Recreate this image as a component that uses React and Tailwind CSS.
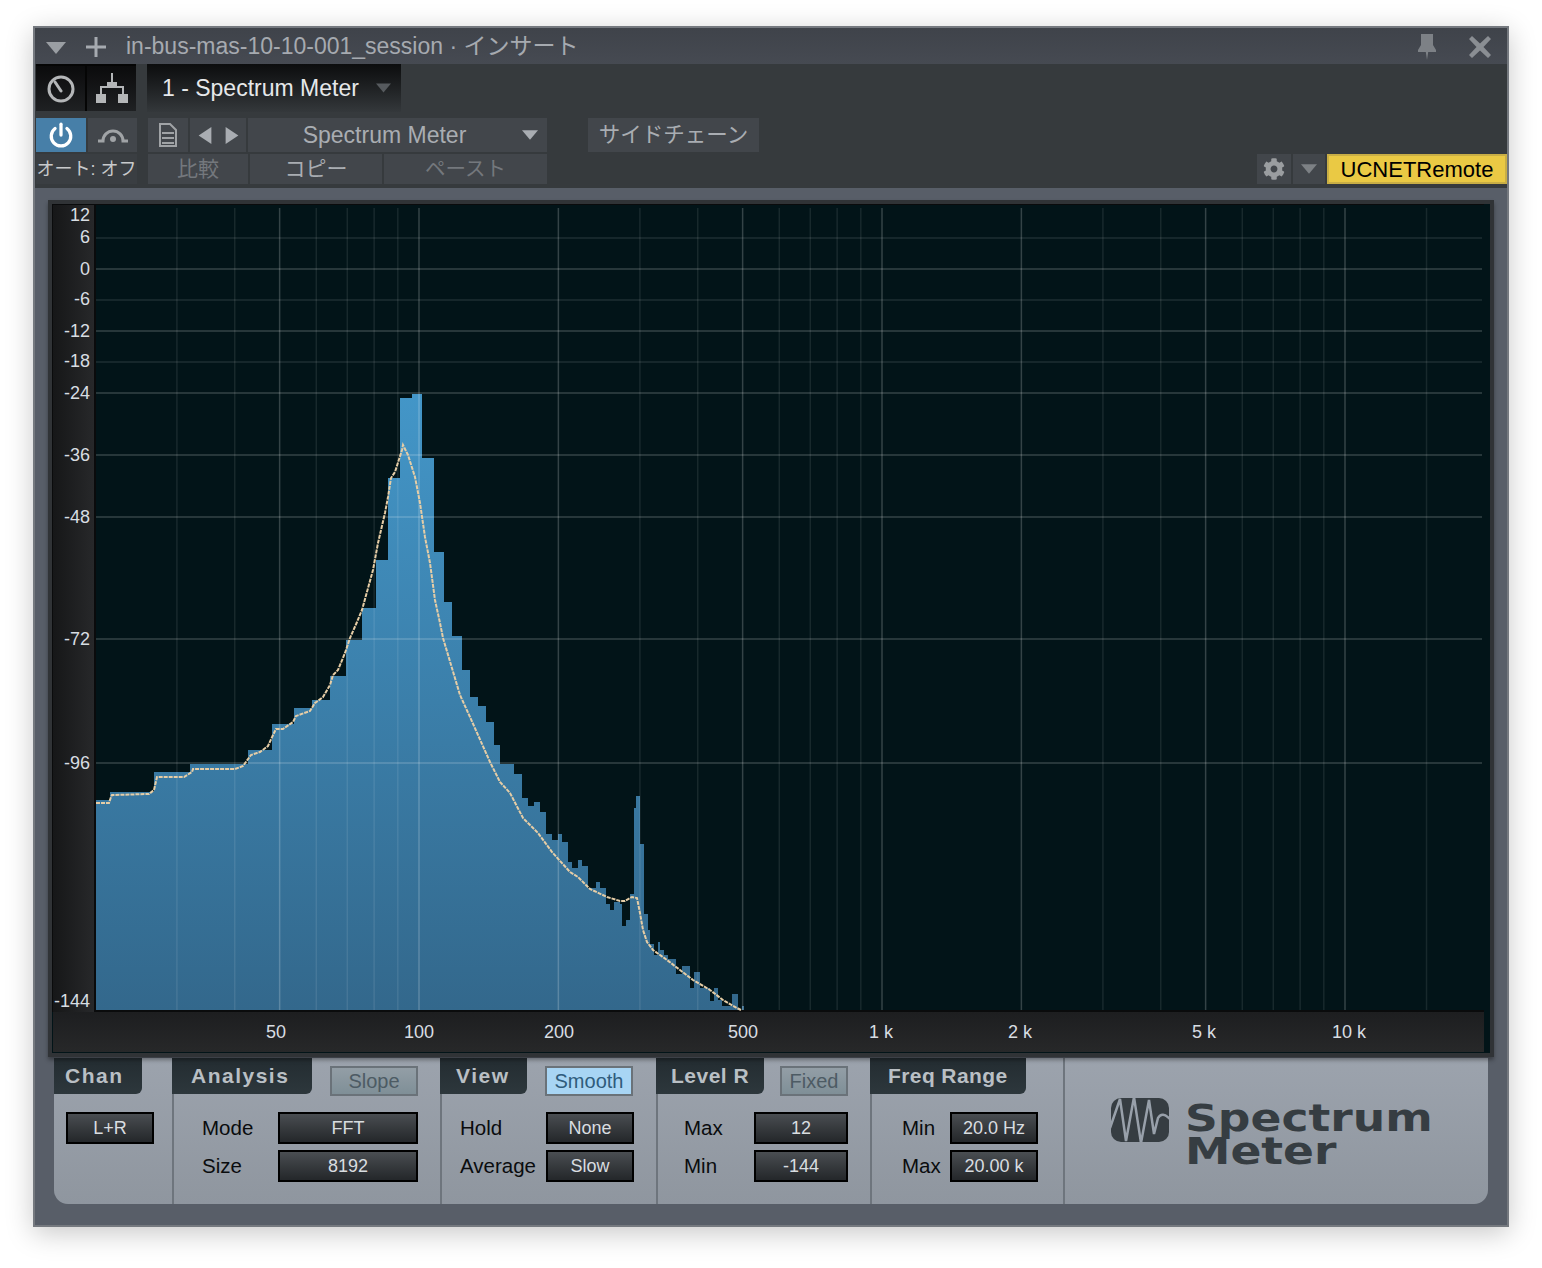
import { FaCog } from 'react-icons/fa'

// [x start, top y] of each spectrum bar, in page pixels
const BARS = [
  [96, 800], [110, 792], [154, 772], [190, 764], [248, 750], [272, 724], [294, 708], [312, 700], [330, 676], [346, 640],
  [362, 608], [376, 560], [388, 478], [400, 398], [412, 394], [422, 458], [434, 552], [444, 602], [452, 636], [462, 670],
  [470, 697], [478, 706], [486, 722], [494, 745], [500, 764], [514, 774], [522, 798], [528, 806], [534, 802], [540, 812],
  [546, 834], [552, 840], [558, 834], [562, 842], [568, 862], [572, 868], [578, 860], [582, 866], [588, 888], [596, 882],
  [600, 888], [606, 904], [610, 910], [614, 902], [620, 904], [622, 926], [626, 920], [630, 894], [634, 808], [636, 796],
  [640, 844], [644, 914], [648, 930], [650, 944], [654, 955], [658, 942], [660, 950], [664, 955], [668, 959], [676, 974],
  [682, 966], [690, 988], [694, 972], [700, 988], [710, 1001], [714, 988], [718, 1000], [722, 1006], [732, 994], [738, 1010], [742, 1006], [744, 1010],
]

const CURVE = [
  [96, 803], [109, 803], [111, 797], [112, 795], [149, 794], [154, 790], [157, 777], [184, 777], [192, 772], [193, 769],
  [235, 769], [243, 766], [251, 755], [260, 752], [268, 746], [273, 735], [276, 729], [283, 729], [293, 722], [296, 716],
  [310, 711], [315, 703], [323, 697], [330, 685], [333, 675], [338, 670], [345, 653], [350, 638], [357, 622], [362, 610],
  [373, 570], [378, 543], [385, 513], [388, 497], [391, 478], [395, 472], [402, 450], [403, 445], [408, 455], [415, 477],
  [420, 503], [425, 537], [430, 563], [435, 600], [440, 623], [443, 638], [460, 695], [470, 717], [490, 762], [500, 782],
  [510, 793], [523, 818], [538, 833], [552, 852], [570, 872], [578, 877], [590, 889], [607, 897], [620, 901], [625, 901],
  [632, 897], [637, 898], [640, 913], [643, 930], [647, 942], [653, 950], [667, 960], [680, 970], [693, 980], [710, 990],
  [723, 1000], [737, 1008], [741, 1010],
]

const freqX = (f) => 419 + 463 * Math.log10(f / 100)

const MAJOR_FREQS = [50, 100, 200, 500, 1000, 2000, 5000, 10000]
const MINOR_FREQS = [30, 40, 60, 70, 80, 90, 300, 400, 600, 700, 800, 900, 3000, 4000, 6000, 7000, 8000, 9000, 15000]
const MAJOR_DB = [269, 331, 393, 455, 517, 639, 763]
const MINOR_DB = [238, 300, 362]

const DB_LABELS = [
  ['12', 215], ['6', 237], ['0', 269], ['-6', 299], ['-12', 331], ['-18', 361], ['-24', 393],
  ['-36', 455], ['-48', 517], ['-72', 639], ['-96', 763], ['-144', 1001],
]
const FREQ_LABELS = [
  ['50', 276], ['100', 419], ['200', 559], ['500', 743], ['1 k', 881], ['2 k', 1020], ['5 k', 1204], ['10 k', 1349],
]

function barsPath() {
  let d = 'M96 1010'
  BARS.forEach(([x, top], i) => {
    const next = BARS[i + 1] ? BARS[i + 1][0] : 745
    d += ` L${x} ${top} L${next} ${top}`
  })
  return d + ' L745 1010 Z'
}

function Spectrum() {
  return (
    <svg className="block w-[1388px] h-[807px]" viewBox="96 205 1388 807">
      <defs>
        <linearGradient id="bar" gradientUnits="userSpaceOnUse" x1="0" y1="394" x2="0" y2="1010">
          <stop offset="0" stopColor="#4396c8" />
          <stop offset="1" stopColor="#33688c" />
        </linearGradient>
      </defs>
      <rect x="96" y="205" width="1388" height="805" fill="#021418" />
      <path d={barsPath()} fill="url(#bar)" />
      {MINOR_FREQS.map((f) => (
        <line key={f} x1={freqX(f)} x2={freqX(f)} y1="208" y2="1010" stroke="#fff" strokeOpacity="0.09" strokeWidth="1.5" />
      ))}
      {MAJOR_FREQS.map((f) => (
        <line key={f} x1={freqX(f)} x2={freqX(f)} y1="208" y2="1010" stroke="#fff" strokeOpacity="0.2" strokeWidth="1.5" />
      ))}
      {MINOR_DB.map((y) => (
        <line key={y} x1="96" x2="1482" y1={y} y2={y} stroke="#fff" strokeOpacity="0.11" strokeWidth="1.5" />
      ))}
      {MAJOR_DB.map((y) => (
        <line key={y} x1="96" x2="1482" y1={y} y2={y} stroke="#fff" strokeOpacity="0.2" strokeWidth="1.5" />
      ))}
      <polyline
        points={CURVE.map((p) => p.join(',')).join(' ')}
        fill="none"
        stroke="#e6cda6"
        strokeWidth="2"
        strokeDasharray="4 1"
      />
    </svg>
  )
}

function Tri({ dir = 'down', className }) {
  const pts = { down: '0,0 20,0 10,12', left: '12,0 12,16 0,8', right: '0,0 12,8 0,16' }
  const box = dir === 'down' ? '0 0 20 12' : '0 0 12 16'
  return (
    <svg viewBox={box} className={className}>
      <polygon points={pts[dir]} fill="currentColor" />
    </svg>
  )
}

function TitleBar() {
  return (
    <div className="flex items-center h-[36px] bg-linear-to-b from-[#3f434a] to-[#464a52] text-[#a6aab0]">
      <Tri className="ml-[11px] w-[20px] h-[12px] text-[#9a9ea3] mt-[3px]" />
      <svg viewBox="0 0 20 20" className="ml-[20px] w-[20px] h-[20px] text-[#a6aab0] mt-[2px]">
        <path d="M8.5 0h3v8.5H20v3h-8.5V20h-3v-8.5H0v-3h8.5z" fill="currentColor" />
      </svg>
      <span className="ml-[20px] text-[23px] leading-none whitespace-nowrap">in-bus-mas-10-10-001_session · インサート</span>
      <svg viewBox="0 0 18 26" className="ml-auto w-[18px] h-[26px] text-[#7d8186] mt-[2px]">
        <path d="M3 0h12v11l3 5v2H10.2L9 26l-1.200-8H0v-2l3-5z" fill="currentColor" />
      </svg>
      <svg viewBox="0 0 22 22" className="ml-[33px] mr-[16px] w-[22px] h-[22px] text-[#8a8e93] mt-[2px]">
        <path d="M3 0l8 7.500L19 0l3 3-7.500 8 7.500 8-3 3-8-7.500L3 22l-3-3 7.500-8L0 3z" fill="currentColor" />
      </svg>
    </div>
  )
}

function DarkTool({ children }) {
  return (
    <div className="flex items-center justify-center w-[49px] h-full bg-linear-to-b from-[#0b0b0c] to-[#1f2123] text-[#b4b6b8]">
      {children}
    </div>
  )
}

function Tool({ className = '', children }) {
  return <div className={`flex items-center justify-center h-full bg-[#42464b] ${className}`}>{children}</div>
}

function Toolbar() {
  return (
    <div className="flex flex-col h-[124px] pl-[1px] bg-[#363a3d] text-[#a9adb2]">
      <div className="flex h-[48px]">
        <div className="flex gap-[2px] h-[47px] pt-[2px] bg-[#050505]">
          <DarkTool>
            <svg viewBox="0 0 30 30" className="w-[30px] h-[30px]" fill="none" stroke="currentColor" strokeWidth="3">
              <circle cx="15" cy="15" r="12" />
              <path d="M9 8l6 9" strokeLinecap="round" />
            </svg>
          </DarkTool>
          <DarkTool>
            <svg viewBox="0 0 38 32" className="w-[38px] h-[32px]" fill="currentColor">
              <path d="M18 0h2v10h-2z" />
              <path d="M14 9h10v5H14z" />
              <path d="M8 13h22v2H8zM7 13h2v8H7zM29 13h2v8h-2z" />
              <path d="M3 21h10v9H3zM25 21h10v9H25z" />
            </svg>
          </DarkTool>
        </div>
        <div className="flex items-center ml-[11px] w-[254px] pl-[15px] bg-linear-to-b from-[#0c0d0e] to-[#34383b] text-[#e6e8ea]">
          <span className="text-[23px] whitespace-nowrap">1 - Spectrum Meter</span>
          <Tri className="ml-[17px] w-[15px] h-[10px] text-[#565a5e]" />
        </div>
      </div>
      <div className="flex h-[34px] mt-[6px]">
        <div className="flex items-center justify-center w-[50px] h-full bg-[#477fa8] text-white">
          <svg viewBox="0 0 24 24" className="w-[26px] h-[26px]" fill="none" stroke="currentColor" strokeWidth="3" strokeLinecap="round">
            <path d="M12 2v10" />
            <path d="M6.500 6a9 9 0 1 0 11 0" />
          </svg>
        </div>
        <Tool className="w-[49px] ml-[2px]">
          <svg viewBox="0 0 32 16" className="w-[32px] h-[16px] text-[#a0a3a6]" fill="none" stroke="currentColor" strokeWidth="3">
            <path d="M1 14h5a10 10 0 0 1 20 0h5" />
            <circle cx="16" cy="12" r="3" fill="currentColor" stroke="none" />
          </svg>
        </Tool>
        <Tool className="w-[40px] ml-[11px]">
          <svg viewBox="0 0 18 24" className="w-[18px] h-[24px] text-[#a0a3a6]" fill="none" stroke="currentColor" strokeWidth="2">
            <path d="M1 1h10l6 6v16H1zM3 10h12M3 15h12M3 20h12" />
          </svg>
        </Tool>
        <Tool className="w-[56px] ml-[2px] gap-[13px]">
          <Tri dir="left" className="w-[14px] h-[17px]" />
          <Tri dir="right" className="w-[14px] h-[17px]" />
        </Tool>
        <Tool className="relative w-[299px] ml-[2px] pr-[26px]">
          <span className="text-[23px] whitespace-nowrap">Spectrum Meter</span>
          <Tri className="absolute right-[9px] top-[12px] w-[16px] h-[10px]" />
        </Tool>
        <Tool className="w-[171px] ml-[41px]">
          <span className="text-[21.500px] whitespace-nowrap">サイドチェーン</span>
        </Tool>
      </div>
      <div className="flex h-[30px] mt-[2px]">
        <div className="flex items-center justify-center w-[101px] bg-[#3a3e42] text-[#c8cacc]">
          <span className="text-[18px] whitespace-nowrap">オート: オフ</span>
        </div>
        <Tool className="w-[100px] ml-[11px] text-[#74787d]">
          <span className="text-[21px]">比較</span>
        </Tool>
        <Tool className="w-[132px] ml-[2px] text-[#a9adb2]">
          <span className="text-[21px]">コピー</span>
        </Tool>
        <Tool className="w-[163px] ml-[2px] text-[#74787d]">
          <span className="text-[20.500px]">ペースト</span>
        </Tool>
        <Tool className="w-[34px] ml-auto text-[#9a9da0]">
          <FaCog className="w-[22px] h-[22px]" />
        </Tool>
        <Tool className="w-[32px] ml-[2px] text-[#7d8185]">
          <Tri className="w-[16px] h-[10px]" />
        </Tool>
        <div className="flex items-center justify-center w-[180px] ml-[2px] bg-[#eac944] border-2 border-[#c9ae45] text-black">
          <span className="text-[22px] whitespace-nowrap">UCNETRemote</span>
        </div>
      </div>
    </div>
  )
}

function Display() {
  return (
    <div className="relative z-10 w-[1446px] h-[857px] ml-[13px] mt-[12px] border-4 border-[#303336] bg-[#021418] shadow-[0_3px_4px_rgba(0,0,0,0.35)] text-[#d8dde2] text-[18px]">
      <div className="flex h-[808px] pt-px pl-px bg-[#0a0b0c] w-[1432px]">
        <div className="relative w-[41px] h-[807px] bg-linear-to-r from-[#161718] to-[#27282a]">
          {DB_LABELS.map(([label, y]) => (
            <span key={label} className="absolute right-[4px] leading-none -translate-y-1/2" style={{ top: y - 205 }}>
              {label}
            </span>
          ))}
        </div>
        <div className="w-[2px]" />
        <Spectrum />
      </div>
      <div className="relative w-[1431px] h-[40px] ml-px bg-linear-to-b from-[#1d1e20] to-[#272829]">
        {FREQ_LABELS.map(([label, x]) => (
          <span key={label} className="absolute top-[11px] leading-none -translate-x-1/2 whitespace-nowrap" style={{ left: x - 53 }}>
            {label}
          </span>
        ))}
      </div>
    </div>
  )
}

function Tab({ className = '', children }) {
  return (
    <div className={`flex items-center h-[36px] bg-linear-to-b from-[#232c31] to-[#2d373c] rounded-br-[6px] font-bold text-[21px] text-[#b9bfc4] whitespace-nowrap ${className}`}>
      {children}
    </div>
  )
}

function Toggle({ on, className = '', children }) {
  return (
    <div
      className={`flex items-center justify-center h-[30px] mt-[8px] border-2 border-[#6a7279] text-[20px] ${
        on ? 'bg-[#a8d5f4] text-[#2f5c7c]' : 'bg-linear-to-b from-[#939ea6] to-[#7f8f97] text-[#4d5b64]'
      } ${className}`}
    >
      {children}
    </div>
  )
}

function PanelButton({ className = '', children }) {
  return (
    <div className={`flex items-center justify-center h-[32px] border-2 border-black bg-linear-to-b from-[#4a4e52] to-[#24272a] text-[18px] text-[#d9dde0] whitespace-nowrap ${className}`}>
      {children}
    </div>
  )
}

function Row({ label, labelW, className = '', children }) {
  return (
    <div className={`flex items-center h-[32px] ${className}`}>
      <span className={`text-[20.500px] text-[#0a0c0e] whitespace-nowrap ${labelW}`}>{label}</span>
      {children}
    </div>
  )
}

function Logo() {
  return (
    <div className="flex items-start pt-[40px] pl-[46px]">
      <svg viewBox="0 0 58 44" className="w-[58px] h-[44px]">
        <rect width="58" height="44" rx="10" fill="#363d42" />
        <path d="M-1 30 L9 1 L15 43 L23 -1 L30 45 L38 2 L43 36 L47 20 Q51 13 59 21" fill="none" stroke="#98a0aa" strokeWidth="2.500" />
      </svg>
      <div className="ml-[16px] mt-[4px] origin-left scale-x-[1.2] [font-family:DejaVu_Sans,sans-serif] font-bold text-[38px] leading-[33px] text-[#363d42]">
        <div>Spectrum</div>
        <div>Meter</div>
      </div>
    </div>
  )
}

function BottomPanel() {
  return (
    <div className="flex w-[1434px] h-[146px] ml-[19px] mt-px rounded-b-[14px] overflow-hidden bg-linear-to-b from-[#9ca3ad] to-[#8f969f]">
      <div className="w-[118px]">
        <Tab className="w-[88px] pl-[11px] tracking-[1.500px]">Chan</Tab>
        <PanelButton className="w-[88px] ml-[12px] mt-[18px]">L+R</PanelButton>
      </div>
      <div className="w-[268px] border-l-2 border-[#6e757d]">
        <div className="flex -ml-[2px]">
          <Tab className="w-[140px] pl-[19px] tracking-[1.500px]">Analysis</Tab>
          <Toggle className="w-[88px] ml-[18px]">Slope</Toggle>
        </div>
        <Row label="Mode" labelW="w-[76px]" className="ml-[28px] mt-[16px]">
          <PanelButton className="w-[140px]">FFT</PanelButton>
        </Row>
        <Row label="Size" labelW="w-[76px]" className="ml-[28px] mt-[6px]">
          <PanelButton className="w-[140px]">8192</PanelButton>
        </Row>
      </div>
      <div className="w-[216px] border-l-2 border-[#6e757d]">
        <div className="flex -ml-[2px]">
          <Tab className="w-[87px] pl-[16px] tracking-[1.500px]">View</Tab>
          <Toggle on className="w-[88px] ml-[18px]">Smooth</Toggle>
        </div>
        <Row label="Hold" labelW="w-[86px]" className="ml-[18px] mt-[16px]">
          <PanelButton className="w-[88px]">None</PanelButton>
        </Row>
        <Row label="Average" labelW="w-[86px]" className="ml-[18px] mt-[6px]">
          <PanelButton className="w-[88px]">Slow</PanelButton>
        </Row>
      </div>
      <div className="w-[214px] border-l-2 border-[#6e757d]">
        <div className="flex -ml-[2px]">
          <Tab className="w-[108px] pl-[15px] tracking-[0.500px]">Level R</Tab>
          <Toggle className="w-[68px] ml-[16px]">Fixed</Toggle>
        </div>
        <Row label="Max" labelW="w-[70px]" className="ml-[26px] mt-[16px]">
          <PanelButton className="w-[94px]">12</PanelButton>
        </Row>
        <Row label="Min" labelW="w-[70px]" className="ml-[26px] mt-[6px]">
          <PanelButton className="w-[94px]">-144</PanelButton>
        </Row>
      </div>
      <div className="w-[193px] border-l-2 border-[#6e757d]">
        <div className="flex -ml-[2px]">
          <Tab className="w-[156px] pl-[18px] tracking-[0.400px]">Freq Range</Tab>
        </div>
        <Row label="Min" labelW="w-[48px]" className="ml-[30px] mt-[18px]">
          <PanelButton className="w-[88px]">20.0 Hz</PanelButton>
        </Row>
        <Row label="Max" labelW="w-[48px]" className="ml-[30px] mt-[6px]">
          <PanelButton className="w-[88px]">20.00 k</PanelButton>
        </Row>
      </div>
      <div className="flex-1 border-l-2 border-[#6e757d]">
        <Logo />
      </div>
    </div>
  )
}

export default function App() {
  return (
    <div className="w-[1542px] h-[1268px] bg-white pt-[26px] pl-[33px] [font-family:Liberation_Sans,Noto_Sans_CJK_JP,sans-serif]">
      <div className="w-[1476px] h-[1201px] border-2 border-[#75797f] bg-[#585e68] shadow-[0_6px_26px_rgba(0,0,0,0.22)]">
        <TitleBar />
        <Toolbar />
        <Display />
        <BottomPanel />
      </div>
    </div>
  )
}
